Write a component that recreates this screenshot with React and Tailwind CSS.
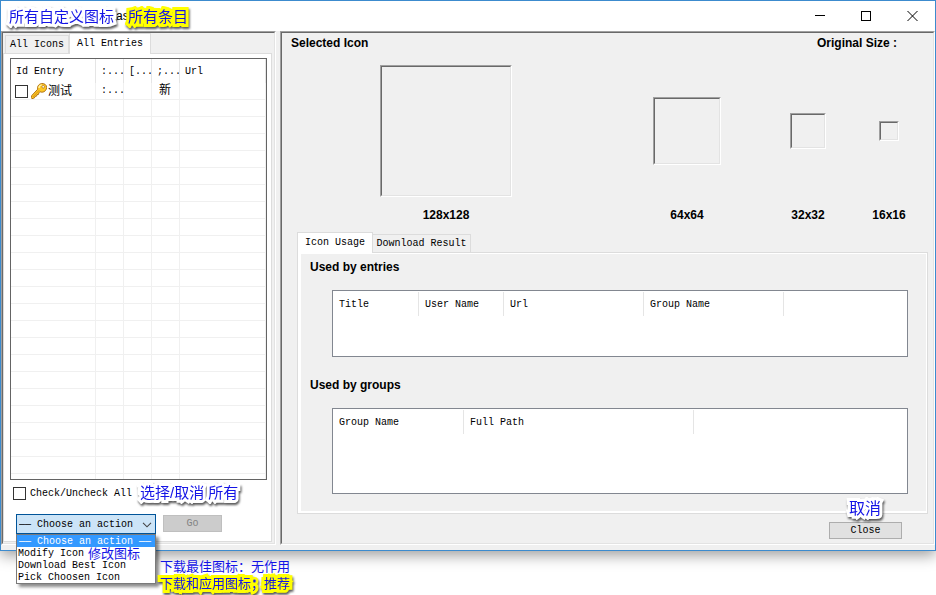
import React from "react";

const MONO = "font-['Liberation_Mono','Noto_Sans_CJK_SC',monospace] text-[10px] leading-3";
const SANS = "font-['Liberation_Sans','Noto_Sans_CJK_SC',sans-serif]";
const HEADING = "font-['Liberation_Sans',sans-serif] text-xs leading-4 font-bold";

function Sunken({ className = "", innerClassName = "", children }) {
  return (
    <div className={`flex border border-t-[#a0a0a0] border-l-[#a0a0a0] border-r-white border-b-white ${className}`}>
      <div className={`min-w-0 flex-1 border border-t-[#696969] border-l-[#696969] border-r-[#e3e3e3] border-b-[#e3e3e3] ${innerClassName}`}>
        {children}
      </div>
    </div>
  );
}

function Note({ className = "", yellow = false, children }) {
  return (
    <span
      className={`pointer-events-none absolute z-20 whitespace-nowrap text-[#1414e6] [paint-order:stroke_fill] [stroke-linejoin:round] ${
        yellow ? "[-webkit-text-stroke:6px_#ffff00]" : "[-webkit-text-stroke:6px_#ffffff]"
      } drop-shadow-[1px_2px_1px_rgba(0,0,0,0.65)] ${SANS} ${className}`}
    >
      {children}
    </span>
  );
}

function Tab({ selected, className = "", children }) {
  return (
    <button
      type="button"
      role="tab"
      aria-selected={selected}
      className={`border border-b-0 border-[#dcdcdc] ${
        selected ? "relative z-10 -mb-px h-[21px] bg-white" : "h-[18px] border-l-0 bg-[#f0f0f0] pt-px"
      } ${MONO} ${className}`}
    >
      {children}
    </button>
  );
}

function KeyIcon() {
  return (
    <svg viewBox="0 0 16 16" className="size-4 shrink-0" aria-hidden="true">
      <path
        d="M8.600 1.300C10.800-.2 14 .4 15.200 2.600c1.100 2.300 0 5-2.200 6.100-1.400.7-2.900.6-4.100 0l-1 1.200-.4 1.500-1.500.2-.4 1.500-1.500.3-.7 1.500-2.500.8L.3 14.500l.5-2L6.700 6.200C6.200 4.300 6.900 2.400 8.600 1.300z"
        fill="#ffc926"
        stroke="#a8680c"
        strokeWidth="0.9"
      />
      <path d="M1.800 14 8.200 7.300" stroke="#d08a10" strokeWidth="0.9" />
      <path d="M8 5c0-1.700 1.200-2.900 2.700-3.100" stroke="#fff3a8" strokeWidth="1.300" fill="none" />
      <circle cx="12.200" cy="3.800" r="1.300" fill="#fff" stroke="#a8680c" strokeWidth="0.7" />
    </svg>
  );
}

function EntryList() {
  const emptyRows = Array.from({ length: 22 }, (_, i) => i);
  const th = "h-6 border-r border-[#e5e5e5] pt-0.5 pl-[5px] text-left font-normal whitespace-nowrap overflow-hidden";
  const td = "h-[17px] border-r border-b border-[#f0f0f0] p-0";
  return (
    <div className="border border-[#646464] bg-white">
      <table className={`w-full table-fixed border-separate border-spacing-0 ${MONO}`}>
        <colgroup>
          <col className="w-[85px]" />
          <col className="w-7" />
          <col className="w-7" />
          <col className="w-7" />
          <col />
        </colgroup>
        <thead>
          <tr>
            <th className={th}>Id Entry</th>
            <th className={th}>:...</th>
            <th className={th}>[...</th>
            <th className={th}>;...</th>
            <th className={th}>Url</th>
          </tr>
        </thead>
        <tbody>
          <tr>
            <td className={td}>
              <label className="flex h-4 items-center pl-1 text-xs leading-4">
                <input type="checkbox" className="mr-[3px] size-[13px] shrink-0 appearance-none border border-[#333] bg-white" />
                <KeyIcon />
                <span className="pt-px pl-px">测试</span>
              </label>
            </td>
            <td className={`${td} pl-[5px]!`}>:...</td>
            <td className={td} />
            <td className={`${td} pl-[7px]! text-xs leading-4`}>新</td>
            <td className={td} />
          </tr>
          {emptyRows.map((i) => (
            <tr key={i}>
              <td className={td} />
              <td className={td} />
              <td className={td} />
              <td className={td} />
              <td className={td} />
            </tr>
          ))}
          <tr>
            {[0, 1, 2, 3, 4].map((i) => (
              <td key={i} className="h-[5px] border-r border-[#f0f0f0] p-0" />
            ))}
          </tr>
        </tbody>
      </table>
    </div>
  );
}

function UsageTable({ columns, className }) {
  return (
    <div className={`border border-[#828790] bg-white pt-px ${className}`}>
      <table className={`w-full table-fixed border-separate border-spacing-0 ${MONO}`}>
        <thead>
          <tr>
            {columns.map((c) => (
              <th
                key={c.name}
                className={`h-6 border-r border-[#e5e5e5] pt-0.5 pr-0 pl-1.5 text-left font-normal ${c.width}`}
              >
                {c.name}
              </th>
            ))}
            <th className="p-0" />
          </tr>
        </thead>
      </table>
    </div>
  );
}

function ActionPicker() {
  const options = ["Modify Icon", "Download Best Icon", "Pick Choosen Icon"];
  return (
    <div className="relative w-[140px]">
      <select
        aria-label="Action"
        className={`block h-5 w-full appearance-none overflow-hidden border border-[#005499] bg-[#cce4f7] pt-0.5 pr-5 pl-0.5 text-black ${MONO}`}
      >
        <option>—— Choose an action ——</option>
        {options.map((o) => (
          <option key={o}>{o}</option>
        ))}
      </select>
      <svg viewBox="0 0 10 6" className="pointer-events-none absolute top-2 right-1 h-1.5 w-2.5" aria-hidden="true">
        <path d="M1 .8 5 4.800 9 .8" fill="none" stroke="#444" strokeWidth="1.100" />
      </svg>
      <ul
        role="listbox"
        aria-label="Action choices"
        className={`absolute top-5 left-0 z-10 w-full border border-[#7a7a7a] bg-white shadow-[3px_3px_3px_rgba(0,0,0,0.45)] ${MONO} leading-[14px]!`}
      >
        <li role="option" aria-selected="true" className="h-3 bg-[#3399ff] pl-0.5 whitespace-nowrap text-white">
          —— Choose an action ——
        </li>
        {options.map((o) => (
          <li key={o} role="option" aria-selected="false" className="h-3 pl-px whitespace-nowrap">
            {o}
          </li>
        ))}
      </ul>
      <span className={`absolute top-8 left-[72px] z-20 text-[13px] leading-4 whitespace-nowrap text-[#1414e6] ${SANS}`}>
        修改图标
      </span>
      <span className={`absolute top-[45px] left-36 text-[13px] leading-4 whitespace-nowrap text-[#1414e6] ${SANS}`}>
        下载最佳图标：无作用
      </span>
      <Note yellow className="top-[62px] left-36 text-[13px] leading-4">
        下载和应用图标；推荐
      </Note>
    </div>
  );
}

function LeftPanel() {
  return (
    <Sunken className="w-[275px] shrink-0" innerClassName="flex flex-col pr-0.5 pb-px">
      <div role="tablist" className="flex h-5 items-end pl-0.5">
        <Tab className="w-16 border-l!">All Icons</Tab>
        <Tab selected className="w-[82px]">
          All Entries
        </Tab>
      </div>
      <div className="flex-1 border border-[#dcdcdc] bg-white pt-1 pr-1 pb-[7px] pl-1.5">
        <EntryList />
        <div className="relative mt-[7px] flex h-[13px] items-center pl-[3px]">
          <label className={`flex items-center gap-1 ${MONO}`}>
            <input type="checkbox" className="size-[13px] appearance-none border border-[#333] bg-white" />
            Check/Uncheck All
          </label>
          <Note className="-top-1 left-[130px] text-[15px] leading-5">选择/取消 所有</Note>
        </div>
        <div className="mt-3.5 flex items-start gap-[7px] pl-1.5">
          <ActionPicker />
          <button
            type="button"
            disabled
            className={`mt-px h-[17px] w-[59px] border border-[#bfbfbf] bg-[#cccccc] pt-px text-[#838383] ${MONO}`}
          >
            Go
          </button>
        </div>
      </div>
    </Sunken>
  );
}

function Preview({ size, label }) {
  return (
    <figure className="flex flex-col items-center">
      <div className="flex h-[132px] items-center">
        <Sunken className={size} />
      </div>
      <figcaption className={`mt-[10px] ${HEADING}`}>{label}</figcaption>
    </figure>
  );
}

function RightPanel() {
  return (
    <Sunken className="min-w-0 flex-1" innerClassName="flex flex-col">
      <div className={`flex justify-between pt-0.5 pr-9 pl-[9px] ${HEADING}`}>
        <h2>Selected Icon</h2>
        <span>Original Size :</span>
      </div>
      <div className="mt-3.5 grid grid-cols-[328fr_154fr_88fr_74fr] pr-[7px]">
        <Preview size="size-[132px]" label="128x128" />
        <Preview size="size-[68px]" label="64x64" />
        <Preview size="size-9" label="32x32" />
        <Preview size="size-5" label="16x16" />
      </div>
      <div className="mt-[9px] mr-[5px] ml-[15px]">
        <div role="tablist" className="flex h-5 items-end">
          <Tab selected className="w-[76px]">
            Icon Usage
          </Tab>
          <Tab className="w-[98px]">Download Result</Tab>
        </div>
        <div className="border border-[#dcdcdc] bg-white pt-px pr-px pb-0.5 pl-[3px]">
          <div className="bg-[#f0f0f0] pt-[5px] pr-[18px] pb-[17px] pl-[9px]">
            <h3 className={HEADING}>Used by entries</h3>
            <UsageTable
              className="mt-[15px] ml-[22px] h-[67px]"
              columns={[
                { name: "Title", width: "w-[86px]" },
                { name: "User Name", width: "w-[85px]" },
                { name: "Url", width: "w-[140px]" },
                { name: "Group Name", width: "w-[140px]" },
              ]}
            />
            <h3 className={`mt-5 ${HEADING}`}>Used by groups</h3>
            <UsageTable
              className="mt-[15px] ml-[22px] h-[86px]"
              columns={[
                { name: "Group Name", width: "w-[131px]" },
                { name: "Full Path", width: "w-[230px]" },
              ]}
            />
          </div>
        </div>
      </div>
      <div className="mt-2 flex justify-end pr-[31px]">
        <div className="relative">
          <button type="button" className={`block h-[17px] w-[73px] border border-[#adadad] bg-[#e1e1e1] pt-px ${MONO}`}>
            Close
          </button>
          <Note className="-top-[23px] left-5 text-base leading-5">取消</Note>
        </div>
      </div>
    </Sunken>
  );
}

function TitleBar() {
  const btn = "flex h-[29px] w-[46px] items-center justify-center";
  const svg = "size-[11px]";
  return (
    <header className="relative flex h-[30px] items-center bg-white">
      <span className={`flex-1 pl-[115px] text-xs leading-4 ${SANS}`}>as</span>
      <Note className="top-1.5 left-2 text-[15px] leading-5">所有自定义图标</Note>
      <Note yellow className="top-1.5 left-[127px] text-[15px] leading-5">
        所有条目
      </Note>
      <button type="button" aria-label="Minimize" className={btn}>
        <svg viewBox="0 0 11 11" className={svg}>
          <path d="M0 4.500h10" stroke="#000" />
        </svg>
      </button>
      <button type="button" aria-label="Maximize" className={btn}>
        <svg viewBox="0 0 11 11" className={svg}>
          <rect x=".5" y=".5" width="9" height="9" fill="none" stroke="#000" />
        </svg>
      </button>
      <button type="button" aria-label="Close window" className={btn}>
        <svg viewBox="0 0 11 11" className={svg}>
          <path d="M.5 0l10 10M10.500 0l-10 10" stroke="#000" />
        </svg>
      </button>
    </header>
  );
}

export default function App() {
  return (
    <div className="min-h-screen overflow-hidden bg-white text-black">
      <main className="border border-[#3c8bce] bg-[#f0f0f0] shadow-[0_4px_14px_rgba(0,0,0,0.4)]">
        <TitleBar />
        <div className="flex gap-1 pb-[5px]">
          <LeftPanel />
          <RightPanel />
        </div>
      </main>
    </div>
  );
}
